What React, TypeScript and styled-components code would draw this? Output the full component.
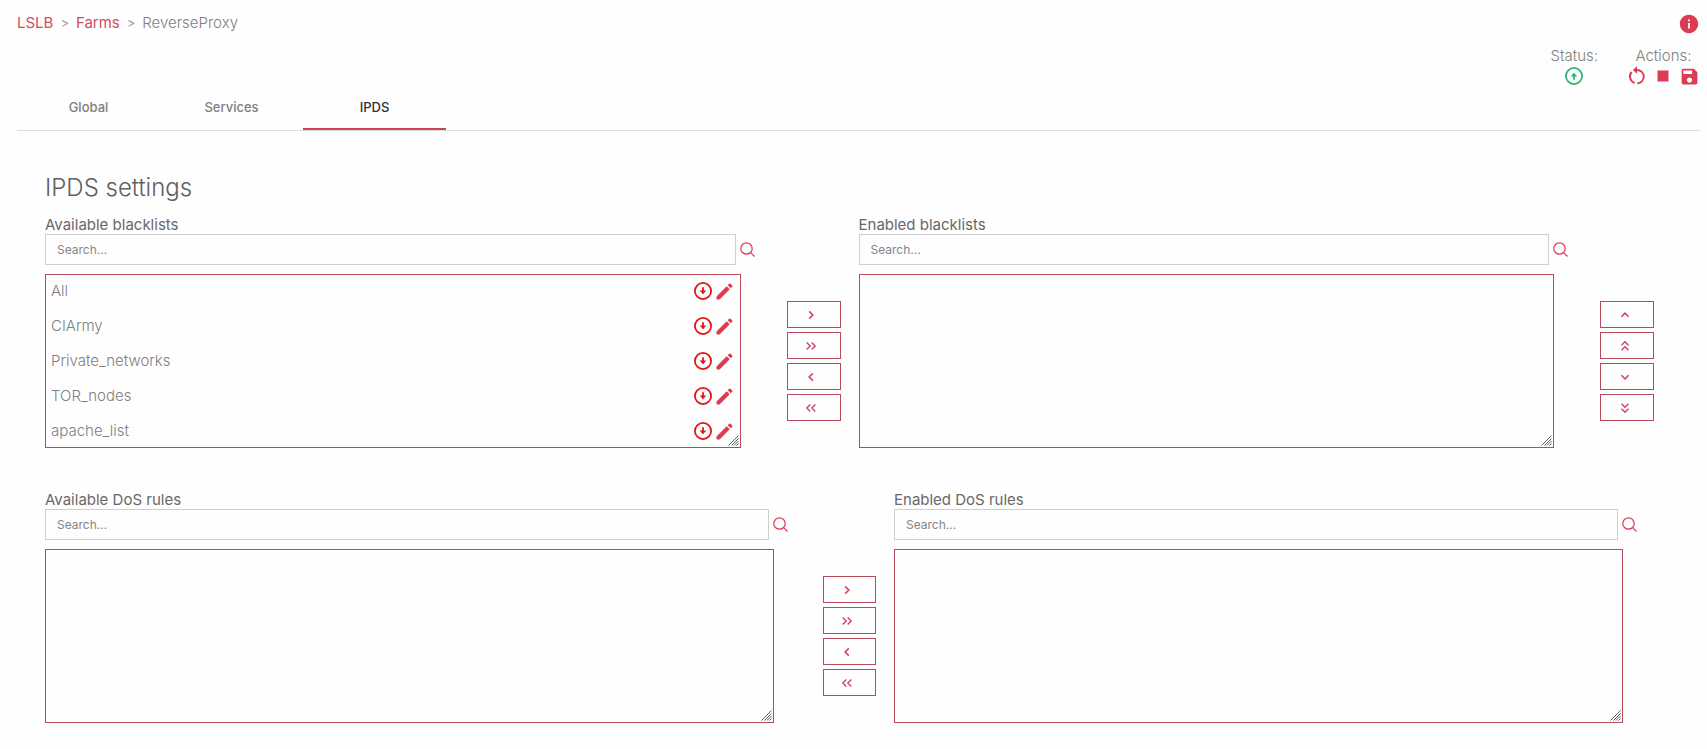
import React from "react";
import styled, { createGlobalStyle } from "styled-components";
import { MdInfo, MdSave, MdStop } from "react-icons/md";

const RED = "#dc3c52";
const LINE = "#b94a5c";

const GlobalStyle = createGlobalStyle`
  *, *::before, *::after { box-sizing: border-box; }
  body {
    margin: 0;
    background: #fefefe;
    color: #808080;
    font-family: Inter, "Liberation Sans", sans-serif;
    font-size: 15px;
    font-weight: 300;
    line-height: 20px;
  }
  button { font: inherit; color: inherit; cursor: pointer; }
`;

const Page = styled.div`
  padding: 13px 7px 24px 17px;
`;

const TopBar = styled.header`
  display: flex;
  justify-content: space-between;
`;

const Breadcrumb = styled.nav`
  display: flex;
  gap: 7px;
`;

const Crumb = styled.a`
  color: #d24c60;
  font-weight: 400;
  text-decoration: none;
`;

const Separator = styled.span`
  font-size: 13px;
`;

const IconButton = styled.button`
  display: flex;
  align-items: center;
  justify-content: center;
  flex: none;
  padding: 0;
  border: 0;
  background: none;
  color: ${RED};

  svg { display: block; }
`;

const StatusBar = styled.div`
  display: flex;
  justify-content: flex-end;
  gap: 29px;
  margin-top: 11px;
`;

const StatusGroup = styled.div`
  display: flex;
  flex-direction: column;
  align-items: center;
`;

const StatusIcons = styled.div`
  display: flex;
  gap: 5px;
  height: 20px;
  align-items: center;
`;

const Tabs = styled.div`
  display: flex;
  margin-top: 1px;
  border-bottom: 1px solid #dcdcdc;
`;

const Tab = styled.button<{ $active?: boolean }>`
  width: 143px;
  height: 43px;
  padding: 0 0 2px;
  border: 0;
  border-bottom: 2px solid ${(p) => (p.$active ? "#c8435a" : "transparent")};
  background: none;
  color: ${(p) => (p.$active ? "#303030" : "#808080")};
  font-size: 13px;
  font-weight: 500;
`;

const Content = styled.main`
  display: flex;
  flex-direction: column;
  gap: 42px;
  padding: 42px 46px 0 28px;
`;

const Title = styled.h1`
  margin: 0 0 -30px;
  color: #606060;
  font-size: 24px;
  font-weight: 300;
  line-height: 30px;
`;

const PickList = styled.section<{ $ordered?: boolean }>`
  display: grid;
  grid-template-columns: 1fr auto 1fr ${(p) => (p.$ordered ? "auto" : "")};
  padding-right: ${(p) => (p.$ordered ? 0 : 17)}px;
`;

const ListColumn = styled.div`
  min-width: 0;
`;

const Label = styled.label`
  display: block;
  color: #686868;
  font-weight: 400;
  line-height: 19px;
`;

const SearchRow = styled.div`
  display: flex;
  align-items: center;
  gap: 4px;
  margin-bottom: 9px;
`;

const SearchInput = styled.input`
  flex: 1;
  min-width: 0;
  height: 31px;
  padding: 0 11px;
  border: 1px solid #cfcfcf;
  border-radius: 0;
  background: transparent;
  color: #606060;
  font: inherit;
  font-size: 12px;
  font-weight: 400;

  &::placeholder { color: #858585; opacity: 1; }
`;

const ListBox = styled.div`
  position: relative;
  height: 174px;
  margin-right: 14px;
  border: 1px solid ${LINE};
`;

const Items = styled.ul`
  display: flex;
  flex-direction: column;
  gap: 3px;
  margin: 0;
  padding: 0 7px 0 5px;
  list-style: none;
`;

const Item = styled.li`
  display: flex;
  align-items: center;
  gap: 4px;
  height: 32px;
`;

const ItemName = styled.span`
  flex: 1;
`;

const Grip = styled.svg`
  position: absolute;
  right: 1px;
  bottom: 1px;
`;

const Controls = styled.div<{ $wide?: boolean; $last?: boolean }>`
  display: flex;
  flex-direction: column;
  justify-content: center;
  gap: 4px;
  width: ${(p) => (p.$wide ? 53 : 54)}px;
  height: 174px;
  margin: 59px ${(p) => (p.$last ? 0 : 18)}px 0 ${(p) => (p.$wide ? 35 : 32)}px;
`;

const MoveButton = styled.button`
  display: flex;
  align-items: center;
  justify-content: center;
  height: 27px;
  padding: 0 5px 0 0;
  border: 1px solid ${LINE};
  background: transparent;
  color: #cf4460;
`;

type Direction = "right" | "left" | "up" | "down";

const ANGLES: Record<Direction, number> = { right: 0, down: 90, left: 180, up: 270 };

function Chevron({ direction, double }: { direction: Direction; double?: boolean }) {
  return (
    <svg width="14" height="14" viewBox="0 0 14 14" fill="none" stroke="currentColor" strokeWidth={double ? 1.4 : 1.6} aria-hidden="true">
      <g transform={`rotate(${ANGLES[direction]} 7 7)`}>
        {double ? <path d="M2.700 3.500 6.200 7l-3.500 3.500M7.700 3.500 11.200 7l-3.500 3.500" /> : <path d="M5.200 3.400 8.800 7l-3.600 3.600" />}
      </g>
    </svg>
  );
}

function CircleArrow({ up, color }: { up?: boolean; color: string }) {
  return (
    <svg width="18" height="18" viewBox="0 0 18 18" fill="none" stroke={color} role="img" aria-label={up ? "Up" : "Down"}>
      <circle cx="9" cy="9" r="8.1" strokeWidth="1.8" />
      <g transform={up ? "rotate(180 9 9)" : undefined}>
        <path d="M9 5.200v6" strokeWidth="1.8" />
        <path d="M5.700 8.400h6.600L9 12.300z" fill={color} stroke="none" />
      </g>
    </svg>
  );
}

function Pencil() {
  return (
    <svg width="17" height="17" viewBox="0 0 17 17" fill="currentColor" aria-hidden="true">
      <path d="M.500 13.400 10.700 3.300l3 3L3.600 16.400H1.200a.7.7 0 0 1-.7-.7z" />
      <path d="M11.700 2.300 13.200.8a1 1 0 0 1 1.400 0l1.600 1.600a1 1 0 0 1 0 1.400l-1.500 1.500z" />
    </svg>
  );
}

function Restart() {
  return (
    <svg width="20" height="20" viewBox="0 0 24 24" fill="none" stroke="currentColor" strokeWidth="2.300" aria-hidden="true">
      <path d="M5.600 7.200A8 8 0 0 0 9.300 20.300" />
      <path d="M12.200 20.800A8 8 0 0 0 12 4.800H10" />
      <path d="M12 .400v8.800L7 4.800z" fill="currentColor" stroke="none" />
    </svg>
  );
}

function Magnifier() {
  return (
    <svg width="15" height="15" viewBox="0 0 15 15" fill="none" stroke="currentColor" strokeWidth="1.2" aria-hidden="true">
      <circle cx="6.500" cy="6.500" r="5.700" />
      <path d="m10.600 10.600 3.900 3.900" />
    </svg>
  );
}

function ResizeGrip() {
  return (
    <Grip width="11" height="11" viewBox="0 0 11 11" stroke="#606060" strokeWidth="1" aria-hidden="true">
      <path d="M.500 10.500l10-10M3.500 10.500l7-7M6 10.500l4.500-4.500M8.500 10.500l2-2" />
    </Grip>
  );
}

function FilterList({ id, label, items = [] }: { id: string; label: string; items?: string[] }) {
  return (
    <ListColumn>
      <Label htmlFor={id}>{label}</Label>
      <SearchRow>
        <SearchInput id={id} type="text" placeholder="Search..." />
        <IconButton type="button" aria-label={`Search ${label}`}>
          <Magnifier />
        </IconButton>
      </SearchRow>
      <ListBox>
        <Items>
          {items.map((name) => (
            <Item key={name}>
              <ItemName>{name}</ItemName>
              <CircleArrow color="#e31414" />
              <IconButton type="button" aria-label={`Edit ${name}`}>
                <Pencil />
              </IconButton>
            </Item>
          ))}
        </Items>
        <ResizeGrip />
      </ListBox>
    </ListColumn>
  );
}

function MoveControls({ first, second, wide, last }: { first: Direction; second: Direction; wide?: boolean; last?: boolean }) {
  return (
    <Controls $wide={wide} $last={last}>
      {[first, second].map((direction) => (
        <React.Fragment key={direction}>
          <MoveButton type="button" aria-label={`Move ${direction}`}>
            <Chevron direction={direction} />
          </MoveButton>
          <MoveButton type="button" aria-label={`Move all ${direction}`}>
            <Chevron direction={direction} double />
          </MoveButton>
        </React.Fragment>
      ))}
    </Controls>
  );
}

const BLACKLISTS = ["All", "CIArmy", "Private_networks", "TOR_nodes", "apache_list"];

export default function App() {
  return (
    <>
      <GlobalStyle />
      <Page>
        <TopBar>
          <Breadcrumb aria-label="Breadcrumb">
            <Crumb href="#lslb">LSLB</Crumb>
            <Separator>&gt;</Separator>
            <Crumb href="#farms">Farms</Crumb>
            <Separator>&gt;</Separator>
            <span>ReverseProxy</span>
          </Breadcrumb>
          <IconButton type="button" aria-label="Information">
            <MdInfo size={22} />
          </IconButton>
        </TopBar>
        <StatusBar>
          <StatusGroup>
            <span>Status:</span>
            <StatusIcons>
              <CircleArrow up color="#2bb673" />
            </StatusIcons>
          </StatusGroup>
          <StatusGroup>
            <span>Actions:</span>
            <StatusIcons>
              <IconButton type="button" aria-label="Restart">
                <Restart />
              </IconButton>
              <IconButton type="button" aria-label="Stop">
                <MdStop size={22} />
              </IconButton>
              <IconButton type="button" aria-label="Save">
                <MdSave size={21} />
              </IconButton>
            </StatusIcons>
          </StatusGroup>
        </StatusBar>
        <Tabs role="tablist">
          <Tab type="button" role="tab">Global</Tab>
          <Tab type="button" role="tab">Services</Tab>
          <Tab type="button" role="tab" aria-selected="true" $active>IPDS</Tab>
        </Tabs>
        <Content>
          <Title>IPDS settings</Title>
          <PickList $ordered>
            <FilterList id="available-blacklists" label="Available blacklists" items={BLACKLISTS} />
            <MoveControls first="right" second="left" />
            <FilterList id="enabled-blacklists" label="Enabled blacklists" />
            <MoveControls first="up" second="down" last />
          </PickList>
          <PickList>
            <FilterList id="available-dos" label="Available DoS rules" />
            <MoveControls first="right" second="left" wide />
            <FilterList id="enabled-dos" label="Enabled DoS rules" />
          </PickList>
        </Content>
      </Page>
    </>
  );
}
